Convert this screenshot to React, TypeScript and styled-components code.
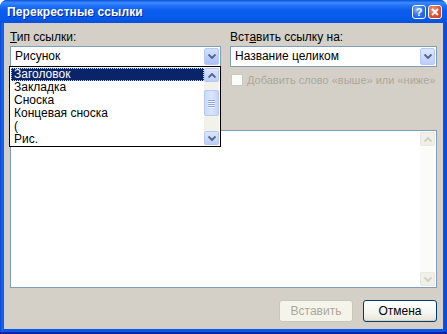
import { styled, createGlobalStyle } from "styled-components";

const GlobalStyle = createGlobalStyle`
	html, body {
		margin: 0;
		padding: 0;
		background: #ffffff;
	}
	body {
		font-family: "Liberation Sans", Arial, sans-serif;
		font-size: 12px;
		color: #000;
	}
`;

const Window = styled.div`
	width: 447px;
	height: 334px;
	display: flex;
	flex-direction: column;
	background: #0052e0;
	border-radius: 7px 7px 0 0;
	overflow: hidden;
	box-sizing: border-box;
`;

const TitleBar = styled.div`
	height: 23px;
	flex: none;
	display: flex;
	align-items: center;
	padding: 0 5px 0 7px;
	background: linear-gradient(
		180deg,
		#0a4fdc 0%,
		#3b8cff 12%,
		#2273f7 24%,
		#0c5ded 45%,
		#075aeb 80%,
		#0a4fdb 100%
	);
`;

const Title = styled.div`
	flex: 1;
	color: #fff;
	font-weight: bold;
	font-size: 12px;
	letter-spacing: 0.1px;
	text-shadow: 1px 1px 0 #0a2a9a;
	padding-top: 1px;
`;

const TitleButtons = styled.div`
	display: flex;
	gap: 2px;
	padding-top: 1px;
`;

const TitleButton = styled.div<{ $kind: "help" | "close" }>`
	width: 14px;
	height: 14px;
	box-sizing: border-box;
	border: 1px solid #fff;
	border-radius: 3px;
	display: flex;
	align-items: center;
	justify-content: center;
	color: #fff;
	font-weight: bold;
	font-size: 11px;
	background: ${(p) =>
		p.$kind === "close"
			? "radial-gradient(circle at 35% 30%, #f09a7e 0%, #e0522f 55%, #c43a17 100%)"
			: "radial-gradient(circle at 35% 30%, #8ab4ff 0%, #2c6cf0 55%, #1f55d6 100%)"};
`;

const Frame = styled.div`
	flex: 1;
	display: flex;
	padding: 0 4px 5px 4px;
	background: linear-gradient(90deg, #0a3fd0 0px, #166cf2 2px, #0a56e6 4px, #0a56e6 calc(100% - 4px), #0a45d8 100%);
	box-shadow: inset 0 -2px 0 #0b25a8;
`;

const Client = styled.div`
	flex: 1;
	display: flex;
	flex-direction: column;
	background: #d4d0c8;
	padding: 7px 6px 7px 6px;
`;

const TopRow = styled.div`
	display: grid;
	grid-template-columns: 211px 207px;
	column-gap: 9px;
`;

const Column = styled.div`
	position: relative;
	display: flex;
	flex-direction: column;
`;

const Label = styled.div<{ $disabled?: boolean; $small?: boolean }>`
	height: 14px;
	line-height: 14px;
	white-space: nowrap;
	font-size: ${(p) => (p.$small ? "11px" : "12px")};
	color: ${(p) => (p.$disabled ? "#aca899" : "#000")};
	u {
		text-decoration: underline;
	}
`;

const Combo = styled.div`
	margin-top: 2px;
	height: 21px;
	box-sizing: border-box;
	border: 1px solid #7f9db9;
	background: #fff;
	display: flex;
	align-items: center;
	padding: 1px;
`;

const ComboText = styled.div`
	flex: 1;
	padding-left: 3px;
	line-height: 17px;
`;

const ArrowButton = styled.div<{ $disabled?: boolean; $hot?: boolean }>`
	width: 15px;
	height: 17px;
	flex: none;
	box-sizing: border-box;
	border-radius: 2px;
	display: flex;
	align-items: center;
	justify-content: center;
	border: 1px solid ${(p) => (p.$disabled ? "#e9e7de" : "#b6c8f4")};
	background: ${(p) =>
		p.$disabled
			? "#f0efe8"
			: p.$hot
			? "linear-gradient(180deg, #d4e0fd 0%, #a9c0f6 100%)"
			: "linear-gradient(180deg, #dce6fe 0%, #bccdf8 100%)"};
	color: ${(p) => (p.$disabled ? "#cfcdc2" : "#4d6185")};
`;

const Chevron = ({ up }: { up?: boolean }) => (
	<svg width="8" height="5" viewBox="0 0 8 5">
		<path
			d={up ? "M0.5 4.5 L4 1 L7.5 4.5" : "M0.5 0.5 L4 4 L7.5 0.5"}
			fill="none"
			stroke="currentColor"
			strokeWidth="1.8"
		/>
	</svg>
);

const CheckRow = styled.div`
	margin-top: 6px;
	height: 13px;
	display: flex;
	align-items: center;
	gap: 4px;
	padding-left: 1px;
`;

const CheckBox = styled.div<{ $disabled?: boolean }>`
	width: 12px;
	height: 12px;
	flex: none;
	border: 1px solid ${(p) => (p.$disabled ? "#cac8bb" : "#1c5180")};
	background: ${(p) => (p.$disabled ? "#fbfbf8" : "#fff")};
	box-sizing: border-box;
`;

const DropList = styled.div`
	position: absolute;
	top: 36px;
	left: -1px;
	width: 212px;
	height: 81px;
	box-sizing: border-box;
	border: 1px solid #000;
	background: #fff;
	display: flex;
	padding: 1px;
	z-index: 2;
`;

const Options = styled.div`
	flex: 1;
	display: flex;
	flex-direction: column;
`;

const Option = styled.div<{ $selected?: boolean }>`
	height: 13px;
	line-height: 11px;
	padding-left: 2px;
	box-sizing: border-box;
	white-space: nowrap;
	background: ${(p) => (p.$selected ? "#0a246a" : "transparent")};
	color: ${(p) => (p.$selected ? "#fff" : "#000")};
	border: 1px dotted ${(p) => (p.$selected ? "#e6dc9a" : "transparent")};
`;

const ScrollBar = styled.div<{ $disabled?: boolean }>`
	width: 15px;
	flex: none;
	display: flex;
	flex-direction: column;
	background: ${(p) => (p.$disabled ? "#fbfbf7" : "#f2f1ea")};
`;

const Track = styled.div`
	flex: 1;
	display: flex;
	flex-direction: column;
`;

const Thumb = styled.div`
	margin-top: 8px;
	height: 26px;
	box-sizing: border-box;
	border: 1px solid #b6c8f4;
	border-radius: 2px;
	background: linear-gradient(90deg, #c9d8fc 0%, #dbe6fe 50%, #c4d4fa 100%);
	display: flex;
	flex-direction: column;
	align-items: center;
	justify-content: center;
	gap: 1px;
`;

const Grip = styled.div`
	width: 7px;
	height: 1px;
	background: #8ea7dc;
	box-shadow: 0 1px 0 #eef3ff;
`;

const ScrollButton = styled(ArrowButton)`
	width: 15px;
	height: 14px;
`;

const BigList = styled.div`
	margin-top: 44px;
	height: 158px;
	box-sizing: border-box;
	border: 1px solid #7f9db9;
	background: #fff;
	display: flex;
	justify-content: flex-end;
	padding: 1px 1px 1px 0;
`;

const ButtonRow = styled.div`
	margin-top: auto;
	display: flex;
	justify-content: flex-end;
	gap: 10px;
`;

const Button = styled.div<{ $disabled?: boolean }>`
	width: 74px;
	height: 22px;
	box-sizing: border-box;
	border-radius: 3px;
	display: flex;
	align-items: center;
	justify-content: center;
	border: 1px solid ${(p) => (p.$disabled ? "#c9c7ba" : "#003c74")};
	background: ${(p) =>
		p.$disabled
			? "#f5f4ea"
			: "linear-gradient(180deg, #ffffff 0%, #f6f5f0 60%, #e6e3d6 100%)"};
	color: ${(p) => (p.$disabled ? "#aca899" : "#000")};
	box-shadow: ${(p) => (p.$disabled ? "none" : "inset 0 -1px 0 #d6d0bd")};
`;

const options = ["Заголовок", "Закладка", "Сноска", "Концевая сноска", "(", "Рис."];

export default function App() {
	return (
		<>
			<GlobalStyle />
			<Window>
				<TitleBar>
					<Title>Перекрестные ссылки</Title>
					<TitleButtons>
						<TitleButton $kind="help">?</TitleButton>
						<TitleButton $kind="close">
							<svg width="8" height="8" viewBox="0 0 8 8">
								<path d="M1 1 L7 7 M7 1 L1 7" stroke="#fff" strokeWidth="1.8" />
							</svg>
						</TitleButton>
					</TitleButtons>
				</TitleBar>
				<Frame>
					<Client>
						<TopRow>
							<Column>
								<Label>
									<u>Т</u>ип ссылки:
								</Label>
								<Combo>
									<ComboText>Рисунок</ComboText>
									<ArrowButton $hot>
										<Chevron />
									</ArrowButton>
								</Combo>
								<DropList>
									<Options>
										{options.map((o, i) => (
											<Option key={o} $selected={i === 0}>
												{o}
											</Option>
										))}
									</Options>
									<ScrollBar>
										<ScrollButton>
											<Chevron up />
										</ScrollButton>
										<Track>
											<Thumb>
												<Grip />
												<Grip />
												<Grip />
												<Grip />
											</Thumb>
										</Track>
										<ScrollButton>
											<Chevron />
										</ScrollButton>
									</ScrollBar>
								</DropList>
							</Column>
							<Column>
								<Label>
									Вст<u>а</u>вить ссылку на:
								</Label>
								<Combo>
									<ComboText>Название целиком</ComboText>
									<ArrowButton>
										<Chevron />
									</ArrowButton>
								</Combo>
								<CheckRow>
									<CheckBox $disabled />
									<Label $disabled $small>
										Добавить слово «выше» или «ниже»
									</Label>
								</CheckRow>
							</Column>
						</TopRow>
						<BigList>
							<ScrollBar $disabled>
								<ScrollButton $disabled>
									<Chevron up />
								</ScrollButton>
								<Track />
								<ScrollButton $disabled>
									<Chevron />
								</ScrollButton>
							</ScrollBar>
						</BigList>
						<ButtonRow>
							<Button $disabled>Вставить</Button>
							<Button>Отмена</Button>
						</ButtonRow>
					</Client>
				</Frame>
			</Window>
		</>
	);
}
